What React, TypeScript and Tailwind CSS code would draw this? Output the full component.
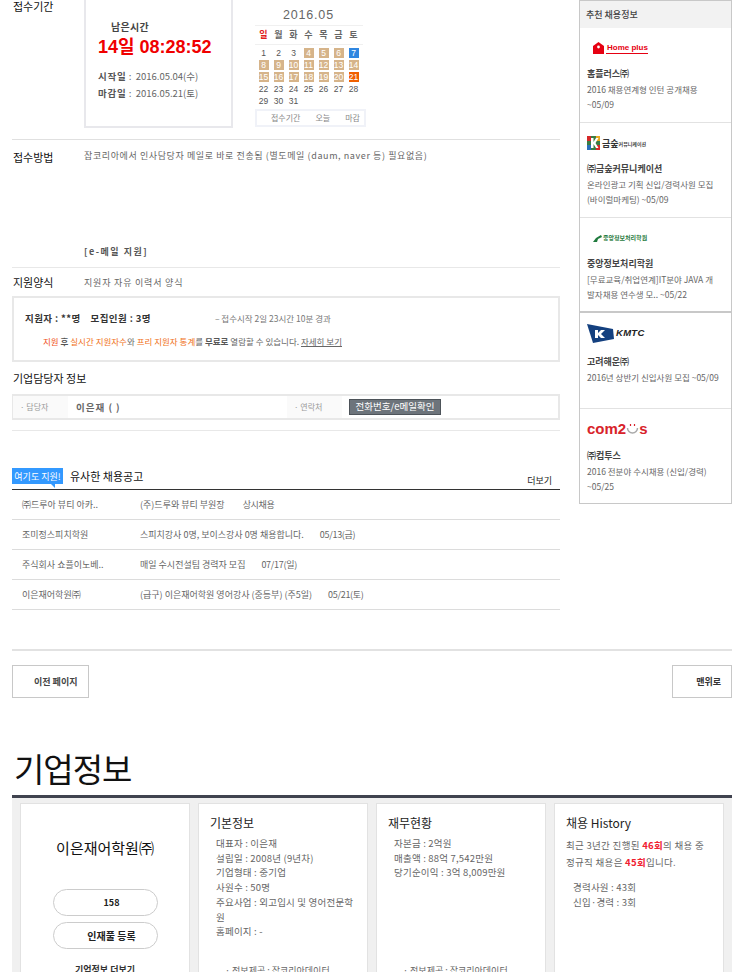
const FONT = "font-['Noto_Sans_CJK_KR','Liberation_Sans',sans-serif]";

const DAYS = ["일", "월", "화", "수", "목", "금", "토"];
const WEEKS = [
  [1, 2, 3, 4, 5, 6, 7],
  [8, 9, 10, 11, 12, 13, 14],
  [15, 16, 17, 18, 19, 20, 21],
  [22, 23, 24, 25, 26, 27, 28],
  [29, 30, 31],
];

const RECOMMENDS = [
  { logo: "homeplus", name: "홈플러스㈜", text: "2016 채용연계형 인턴 공개채용", date: "~05/09", h: "h-[95px]" },
  { logo: "kumsung", name: "㈜금숲커뮤니케이션", text: "온라인광고 기획 신입/경력사원 모집", date: "(바이럴마케팅) ~05/09", h: "h-[95px]" },
  { logo: "joongang", name: "중앙정보처리학원", text: "[무료교육/취업연계]IT분야 JAVA 개", date: "발자채용 연수생 모.. ~05/22", h: "h-[95px]" },
  { logo: "kmtc", name: "고려해운㈜", text: "2016년 상반기 신입사원 모집 ~05/09", date: "", h: "h-[96px]" },
  { logo: "com2us", name: "㈜컴투스", text: "2016 전분야 수시채용 (신입/경력)", date: "~05/25", h: "h-[95px]" },
];

const SIMILAR = [
  { co: "㈜드루아 뷰티 아카..", title: "(주)드루와 뷰티 부원장", date: "상시채용", gap: "ml-[18px]" },
  { co: "조미정스피치학원", title: "스피치강사 0명, 보이스강사 0명 채용합니다.", date: "05/13(금)", gap: "ml-[16px]" },
  { co: "주식회사 쇼플이노베..", title: "매일 수시전설팀 경력자 모집", date: "07/17(일)", gap: "ml-[16px]" },
  { co: "이은재어학원㈜", title: "(급구) 이은재어학원 영어강사 (중등부) (주5일)", date: "05/21(토)", gap: "ml-[16px]" },
];

function Logo({ kind }: { kind: string }) {
  if (kind === "homeplus") {
    return (
      <div className="flex items-center ml-[13px] mt-[13px] h-[14px]">
        <svg width="11" height="12" viewBox="0 0 11 12">
          <path d="M0 4 L5.5 0 L11 4 V12 H0 Z" fill="#e60012" />
          <circle cx="5.5" cy="5" r="1.4" fill="#fff" />
        </svg>
        <span className="ml-[2px] text-[8px] font-bold text-[#e60012] border-b border-[#e60012] leading-[10px] pl-[1px] font-['Liberation_Sans',sans-serif]">Home plus</span>
      </div>
    );
  }
  if (kind === "kumsung") {
    return (
      <div className="flex items-center ml-[7px] mt-[13px] h-[14px]">
        <svg width="13" height="14" viewBox="0 0 13 14">
          <rect width="13" height="14" fill="#3a7d44" />
          <rect width="4" height="5" fill="#d62828" />
          <rect x="9" width="4" height="5" fill="#e9a820" />
          <rect y="9" width="4" height="5" fill="#2a6fbb" />
          <rect x="9" y="9" width="4" height="5" fill="#d62828" />
          <path d="M4 2 H6.5 V6 L9 2 H11.5 L8.500 7 L11.500 12 H9 L6.5 8 V12 H4 Z" fill="#fff" />
        </svg>
        <span className="ml-[2px] text-[9px] font-bold text-[#333] leading-none">금숲</span>
        <span className="text-[5px] font-bold text-[#444] leading-none">커뮤니케이션</span>
      </div>
    );
  }
  if (kind === "joongang") {
    return (
      <div className="flex items-center ml-[13px] mt-[13px] h-[14px]">
        <svg width="9" height="7" viewBox="0 0 9 7">
          <path d="M0 7 L3 3 L8 0 L9 2 L5 4 L4 7 Z" fill="#1f7a3d" />
        </svg>
        <span className="ml-[1px] text-[6px] font-bold text-[#1f7a3d] leading-none">중앙정보처리학원</span>
      </div>
    );
  }
  if (kind === "kmtc") {
    return (
      <div className="flex items-center ml-[7px] mt-[11px] h-[19px]">
        <svg width="27" height="19" viewBox="0 0 27 19">
          <path d="M0 0 L26 5 L27 15 L6 19 Z" fill="#14407f" />
          <path d="M8 6 H11 V9 L14 6 H18 L14 10 L18 14 H14 L11 11 V14 H8 Z" fill="#fff" />
        </svg>
        <span className="ml-[2px] text-[9.500px] font-bold italic text-[#222] tracking-[0.3px] font-['Liberation_Sans',sans-serif]">KMTC</span>
      </div>
    );
  }
  return (
    <div className="flex items-center ml-[7px] mt-[11px] h-[17px] font-['Liberation_Sans',sans-serif] text-[15px] font-bold text-[#d8232a] leading-none">
      <span>com2</span>
      <svg width="13" height="12" viewBox="0 0 13 12" className="mt-[1px]">
        <path d="M1.500 5 A5 5 0 0 0 11.500 5" fill="none" stroke="#a9a9a9" strokeWidth="1.500" />
        <path d="M4.500 1 V3 M8.500 1 V3" stroke="#d8232a" strokeWidth="1.200" />
      </svg>
      <span>s</span>
    </div>
  );
}

export default function App() {
  return (
    <div className={`${FONT} w-[736px] h-[972px] overflow-hidden bg-white text-[9px] text-[#666] relative`}>
      <div className="flex pl-[12px]">
        {/* Left column */}
        <div className="w-[548px] shrink-0">
          {/* 접수기간 */}
          <div className="flex h-[140px] border-b border-[#e0e0e0]">
            <div className="w-[72px] pl-[1px] text-[11px] leading-[12px] text-[#111]">접수기간</div>
            <div className="w-[149px] h-[128px] border-2 border-t-0 border-[#e8e8ec] pl-[12px] pt-[21px] shrink-0">
              <div className="pl-[13px] text-[10px] font-bold text-[#444] leading-[12px] tracking-[0.3px]">남은시간</div>
              <div className="mt-[3px] text-[18px] font-bold text-[#f00000] leading-[22px] font-['Liberation_Sans','Noto_Sans_CJK_KR',sans-serif] whitespace-nowrap">14일 08:28:52</div>
              <div className="mt-[10px] leading-[16.500px] text-[9.500px] whitespace-nowrap">
                <div><b className="text-[#555] tracking-[0.8px]">시작일</b> : &nbsp;2016.05.04(수)</div>
                <div><b className="text-[#555] tracking-[0.8px]">마감일</b> : &nbsp;2016.05.21(토)</div>
              </div>
            </div>
            <div className="ml-[22px] w-[112px]">
              <div className="w-[107px] text-center text-[12.500px] leading-[14px] mt-[8px] text-[#666] tracking-[0.8px] font-['Liberation_Sans',sans-serif]">2016.05</div>
              <div className="mt-[3px] grid grid-cols-[repeat(7,15px)] pl-[1px] h-[20px] items-center border-y border-[#f0f0f0] w-[108px] text-[9px] font-bold">
                {DAYS.map((d, i) => (
                  <span key={d} className={`text-center ${i === 0 ? "text-[#e02020]" : "text-[#666]"}`}>{d}</span>
                ))}
              </div>
              <div className="mt-[3px] pl-[1px] w-[108px]">
                {WEEKS.map((w, wi) => (
                  <div key={wi} className="grid grid-cols-[repeat(7,15px)] h-[12px]">
                    {w.map(n => {
                      const color =
                        n === 7 ? "bg-[#2f86e0] text-white"
                        : n === 21 ? "bg-[#f06000] text-white"
                        : n >= 4 && n <= 20 ? "bg-[#d6b48a] text-white"
                        : "text-[#555]";
                      return (
                        <div key={n} className="flex justify-center">
                          <span className={`w-[10px] h-[10px] text-center text-[8.5px] leading-[11px] whitespace-nowrap flex justify-center font-['Liberation_Sans',sans-serif] ${color}`}>{n}</span>
                        </div>
                      );
                    })}
                  </div>
                ))}
              </div>
              <div className="mt-[1px] border-2 border-[#f0f2f8] h-[18px] w-[111px] flex items-center text-[8px] text-[#888] whitespace-nowrap">
                <span className="ml-[14px]">접수기간</span>
                <span className="ml-[15px]">오늘</span>
                <span className="ml-[15px]">마감</span>
              </div>
            </div>
          </div>

          {/* 접수방법 */}
          <div className="flex h-[128px] border-b border-[#e8e8e8] pt-[10px]">
            <div className="w-[72px] pl-[1px] text-[11px] text-[#111] leading-[14px]">접수방법</div>
            <div className="flex flex-col h-[108px] justify-between">
              <div className="leading-[12px] tracking-[0.6px] whitespace-nowrap">잡코리아에서 인사담당자 메일로 바로 전송됨 (별도메일 (daum, naver 등) 필요없음)</div>
              <div className="font-bold tracking-[1.5px] text-[#555] leading-[12px]">[e-메일 지원]</div>
            </div>
          </div>

          {/* 지원양식 */}
          <div className="flex h-[28px] pt-[7px]">
            <div className="w-[72px] pl-[1px] text-[11px] text-[#111] leading-[14px]">지원양식</div>
            <div className="mt-[2px] leading-[12px] tracking-[0.8px]">지원자 자유 이력서 양식</div>
          </div>

          {/* 지원자 현황 */}
          <div className="border-2 border-[#e8e8e8] h-[66px] pl-[11px] pt-[14px] whitespace-nowrap">
            <div className="flex items-center leading-[12px]">
              <b className="text-[#333] text-[9.500px] tracking-[0.4px]">지원자 : **명</b>
              <b className="ml-[10px] text-[#333] text-[9.500px] tracking-[0.4px]">모집인원 : 3명</b>
              <span className="ml-[64px] text-[8.500px] text-[#777]">– 접수시작 2일 23시간 10분 경과</span>
            </div>
            <div className="mt-[11px] ml-[18px] leading-[12px] text-[8.500px]">
              <span className="text-[#f05020]">지원</span> <b className="text-[#555]">후</b>{" "}
              <span className="text-[#f07020]">실시간 지원자수</span>와{" "}
              <span className="text-[#f07020]">프리 지원자 통계</span>를 <b className="text-[#555]">무료로</b> 열람할 수 있습니다.{" "}
              <span className="underline">자세히 보기</span>
            </div>
          </div>

          {/* 기업담당자 */}
          <div className="mt-[9px] pl-[1px] text-[11px] text-[#111] leading-[14px]">기업담당자 정보</div>
          <div className="mt-[9px] h-[26px] flex border-2 border-l border-[#e8e8e8] items-stretch">
            <div className="w-[55px] bg-[#fafafa] flex items-center pl-[7px] text-[8px] text-[#999]">· 담당자</div>
            <div className="w-[219px] flex items-center pl-[8px] text-[9.500px] font-bold text-[#666] tracking-[1px]">이은재 ( )</div>
            <div className="w-[55px] bg-[#fafafa] flex items-center pl-[7px] text-[8px] text-[#999]">· 연락처</div>
            <div className="flex items-center pl-[7px]">
              <span className="w-[92px] h-[16px] bg-[#6d747b] border border-[#4d5359] text-white text-[9.500px] flex items-center justify-center leading-none whitespace-nowrap">전화번호/e메일확인</span>
            </div>
          </div>
          <div className="mt-[10px] border-b border-[#e8e8e8]" />

          {/* 유사한 채용공고 */}
          <div className="mt-[37px] flex items-end h-[22px] border-b border-[#333] relative">
            <span className="w-[51px] h-[16px] mb-[5px] bg-[#3399ff] text-white text-[9px] flex items-center justify-center leading-none whitespace-nowrap">여기도 지원!</span>
            <span className="absolute left-[39px] top-[16px] w-0 h-0 border-l-[4px] border-l-transparent border-t-[4px] border-t-[#3399ff]" />
            <span className="ml-[7px] mb-[5px] text-[11px] text-[#111] leading-[16px]">유사한 채용공고</span>
            <span className="ml-auto mr-[8px] mb-[2px] text-[9px] text-[#222] leading-[12px]">더보기</span>
          </div>
          {SIMILAR.map(r => (
            <div key={r.co} className="h-[30px] flex items-center border-b-[1px] border-[#dcdcdc] text-[9px] whitespace-nowrap">
              <span className="w-[128px] pl-[10px] shrink-0">{r.co}</span>
              <span>{r.title}</span>
              <span className={`${r.gap} tracking-[-0.3px]`}>{r.date}</span>
            </div>
          ))}
        </div>

        {/* Sidebar */}
        <div className="ml-[19px] w-[153px] shrink-0 border border-[#c8c8c8] h-[504px] overflow-hidden">
          <div className="h-[27px] bg-[#f2f2f2] pl-[6px] flex items-center text-[9px] text-[#444] font-medium">추천 채용정보</div>
          {RECOMMENDS.map((r, i) => (
            <div key={r.name} className={`${r.h} ${i === 2 ? "border-b-2 border-[#c8c8c8]" : i < 4 ? "border-b border-[#e2e2e2]" : ""} overflow-hidden`}>
              <Logo kind={r.logo} />
              <div className="mt-[13px] pl-[7px] text-[9px] font-bold text-[#444] leading-[12px] whitespace-nowrap">{r.name}</div>
              <div className="mt-[2px] pl-[7px] text-[8.500px] leading-[15px] text-[#666] whitespace-nowrap">
                <div>{r.text}</div>
                {r.date && <div>{r.date}</div>}
              </div>
            </div>
          ))}
        </div>
      </div>

      {/* 하단 버튼 */}
      <div className="absolute left-[12px] top-[649px] w-[720px]">
        <div className="border-t-2 border-[#e2e2e2] w-[720px]" />
        <div className="mt-[14px] flex justify-between">
          <div className="w-[77px] h-[33px] border border-[#c8c8c8] flex items-center pl-[21px] text-[9px] font-bold text-[#444]">이전 페이지</div>
          <div className="w-[60px] h-[33px] border border-[#c8c8c8] flex items-center justify-end pr-[10px] text-[9px] font-bold text-[#333]">맨위로</div>
        </div>
        <div className="mt-[44px] pl-[2px] text-[33px] tracking-[-1px] leading-[53px] text-[#111] font-normal">기업정보</div>
        <div className="h-[3px] bg-[#40434f]" />

        <div className="bg-[#f0f0f0] h-[200px] pl-[8px] pt-[5px] flex gap-[8px]">
          <div className="w-[170px] h-[200px] bg-white border border-[#e2e2e2] flex flex-col items-center">
            <div className="mt-[33px] text-[15px] leading-[22px] text-[#111] whitespace-nowrap">이은재어학원㈜</div>
            <div className="mt-[30px] w-[105px] h-[27px] rounded-full border border-[#ccc] flex items-center justify-center text-[9px] font-bold text-[#222] pl-[13px]">158</div>
            <div className="mt-[6px] w-[105px] h-[27px] rounded-full border border-[#ccc] flex items-center justify-center text-[10px] font-bold text-[#222] pl-[13px]">인재풀 등록</div>
            <div className="mt-[14px] text-[9px] font-bold text-[#333] leading-[14px]">기업정보 더보기</div>
          </div>
          <div className="w-[170px] h-[200px] bg-white border border-[#e2e2e2] pl-[11px] pr-[10px]">
            <div className="mt-[10px] text-[12px] text-[#222] leading-[18px]">기본정보</div>
            <div className="mt-[4px] pl-[6px] text-[9.500px] leading-[14.700px] tracking-[0.2px]">
              <div>대표자 : 이은재</div>
              <div>설립일 : 2008년 (9년차)</div>
              <div>기업형태 : 중기업</div>
              <div>사원수 : 50명</div>
              <div>주요사업 : 외고입시 및 영어전문학원</div>
              <div>홈페이지 : -</div>
            </div>
            <div className="mt-[26px] pl-[15px] text-[9px] leading-[12px] text-[#666]">· 정보제공 : 잡코리아데이터</div>
          </div>
          <div className="w-[170px] h-[200px] bg-white border border-[#e2e2e2] pl-[11px]">
            <div className="mt-[10px] text-[12px] text-[#222] leading-[18px]">재무현황</div>
            <div className="mt-[4px] pl-[6px] text-[9.500px] leading-[14.700px] tracking-[0.2px]">
              <div>자본금 : 2억원</div>
              <div>매출액 : 88억 7,542만원</div>
              <div>당기순이익 : 3억 8,009만원</div>
            </div>
            <div className="mt-[85px] pl-[15px] text-[9px] leading-[12px] text-[#666]">· 정보제공 : 잡코리아데이터</div>
          </div>
          <div className="w-[170px] h-[200px] bg-white border border-[#e2e2e2] pl-[11px] pr-[8px]">
            <div className="mt-[10px] text-[12px] text-[#222] leading-[18px]">채용 History</div>
            <div className="mt-[5px] text-[9.500px] leading-[17px] tracking-[0.3px] whitespace-nowrap">
              <div>최근 3년간 진행된 <b className="text-[#f02030]">46회</b>의 채용 중</div>
              <div>정규직 채용은 <b className="text-[#f02030]">45회</b>입니다.</div>
            </div>
            <div className="mt-[9px] pl-[7px] text-[9.500px] leading-[15px] tracking-[0.2px]">
              <div>경력사원 : 43회</div>
              <div>신입·경력 : 3회</div>
            </div>
          </div>
        </div>
      </div>
    </div>
  );
}
